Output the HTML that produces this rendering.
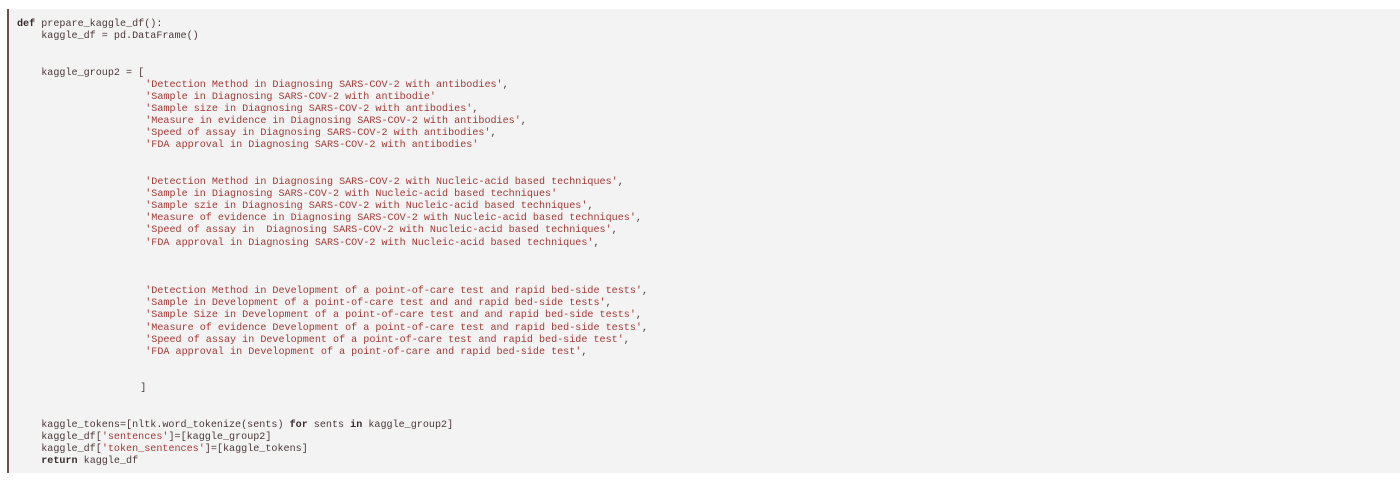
<!DOCTYPE html>
<html><head><meta charset="utf-8"><style>
html,body{margin:0;padding:0;background:#fff;width:1400px;height:490px;overflow:hidden}
.box{position:absolute;left:7px;top:9px;width:1393px;height:464px;background:#f3f3f3;border-left:2px solid #6b5050;box-sizing:border-box}
pre{position:absolute;left:8px;top:10px;margin:0;font-family:"Liberation Mono",monospace;font-size:10.1px;line-height:12.14px;color:#4b3838;white-space:pre}
.s{color:#a23a36}
b{font-weight:bold;color:#3a2a2a}
.i{display:inline-block;width:104px}
.j{display:inline-block;width:99px}
</style></head><body>
<div class="box"><pre><b>def</b> prepare_kaggle_df():
    kaggle_df = pd.DataFrame()


    kaggle_group2 = [
    <span class="i"></span><span class="s">'Detection Method in Diagnosing SARS-COV-2 with antibodies'</span>,
    <span class="i"></span><span class="s">'Sample in Diagnosing SARS-COV-2 with antibodie'</span>
    <span class="i"></span><span class="s">'Sample size in Diagnosing SARS-COV-2 with antibodies'</span>,
    <span class="i"></span><span class="s">'Measure in evidence in Diagnosing SARS-COV-2 with antibodies'</span>,
    <span class="i"></span><span class="s">'Speed of assay in Diagnosing SARS-COV-2 with antibodies'</span>,
    <span class="i"></span><span class="s">'FDA approval in Diagnosing SARS-COV-2 with antibodies'</span>


    <span class="i"></span><span class="s">'Detection Method in Diagnosing SARS-COV-2 with Nucleic-acid based techniques'</span>,
    <span class="i"></span><span class="s">'Sample in Diagnosing SARS-COV-2 with Nucleic-acid based techniques'</span>
    <span class="i"></span><span class="s">'Sample szie in Diagnosing SARS-COV-2 with Nucleic-acid based techniques'</span>,
    <span class="i"></span><span class="s">'Measure of evidence in Diagnosing SARS-COV-2 with Nucleic-acid based techniques'</span>,
    <span class="i"></span><span class="s">'Speed of assay in  Diagnosing SARS-COV-2 with Nucleic-acid based techniques'</span>,
    <span class="i"></span><span class="s">'FDA approval in Diagnosing SARS-COV-2 with Nucleic-acid based techniques'</span>,



    <span class="i"></span><span class="s">'Detection Method in Development of a point-of-care test and rapid bed-side tests'</span>,
    <span class="i"></span><span class="s">'Sample in Development of a point-of-care test and and rapid bed-side tests'</span>,
    <span class="i"></span><span class="s">'Sample Size in Development of a point-of-care test and and rapid bed-side tests'</span>,
    <span class="i"></span><span class="s">'Measure of evidence Development of a point-of-care test and rapid bed-side tests'</span>,
    <span class="i"></span><span class="s">'Speed of assay in Development of a point-of-care test and rapid bed-side test'</span>,
    <span class="i"></span><span class="s">'FDA approval in Development of a point-of-care and rapid bed-side test'</span>,


    <span class="j"></span>]


    kaggle_tokens=[nltk.word_tokenize(sents) <b>for</b> sents <b>in</b> kaggle_group2]
    kaggle_df[<span class="s">'sentences'</span>]=[kaggle_group2]
    kaggle_df[<span class="s">'token_sentences'</span>]=[kaggle_tokens]
    <b>return</b> kaggle_df</pre></div>
</body></html>
